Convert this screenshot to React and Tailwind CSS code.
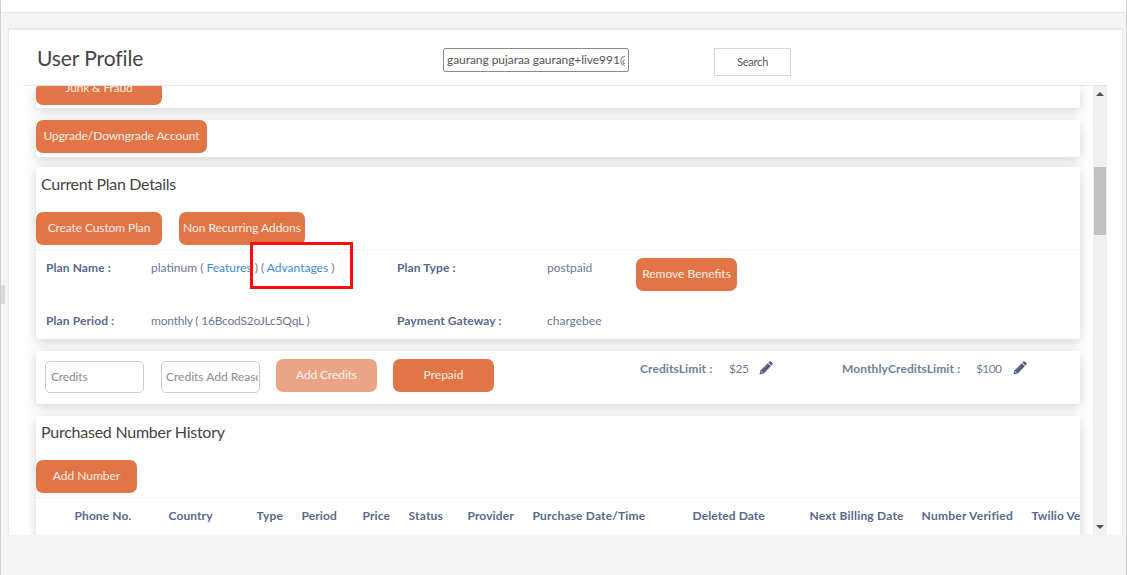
import clsx from "clsx";

const columns = [
  { label: "Phone No.", className: "w-[94px] tracking-[0.1px]" },
  { label: "Country", className: "w-[88px] tracking-[0.1px]" },
  { label: "Type", className: "w-[45px] tracking-[0.2px]" },
  { label: "Period", className: "w-[61px] tracking-[0.1px]" },
  { label: "Price", className: "w-[46px] tracking-[0.1px]" },
  { label: "Status", className: "w-[59px] tracking-[0.2px]" },
  { label: "Provider", className: "w-[65px] tracking-[0.1px]" },
  { label: "Purchase Date/Time", className: "w-40 tracking-[0.17px]" },
  { label: "Deleted Date", className: "w-[117px] tracking-[0.1px]" },
  { label: "Next Billing Date", className: "w-28 tracking-[0.2px]" },
  { label: "Number Verified", className: "w-[110px] tracking-[0.25px]" },
  { label: "Twilio Verified", className: "w-[110px] tracking-[0.1px]" },
];

function Button({ children, className }) {
  return (
    <button
      className={clsx(
        "block h-[33px] shrink-0 rounded-[7px] bg-[#e27546] pb-px text-center text-[12px] whitespace-nowrap text-[#fdeee6]",
        className
      )}
    >
      {children}
    </button>
  );
}

function Card({ children, className }) {
  return (
    <section
      className={clsx(
        "w-[1044px] shrink-0 overflow-hidden rounded-[3px] bg-white shadow-[0_3px_12px_rgba(60,60,75,0.22)]",
        className
      )}
    >
      {children}
    </section>
  );
}

function Field({ label, children, labelClass, valueClass }) {
  return (
    <>
      <b className={clsx("shrink-0 font-bold tracking-[0.1px] whitespace-nowrap", labelClass)}>{label}</b>
      <span className={clsx("shrink-0 whitespace-nowrap", valueClass)}>{children}</span>
    </>
  );
}

function Pencil() {
  return (
    <svg className="size-[14px] shrink-0" viewBox="0 0 14 14" fill="#505b85">
      <path d="M8.7 2.2 11.8 5.3 4.7 12.4 0.5 13.5 1.6 9.3Z" />
      <path d="M9.3 1.6 10.4 0.6Q11.2-.1 12 .7L13.3 2Q14.1 2.8 13.4 3.6L12.4 4.7Z" />
      <path d="M2.4 10.1 3.9 11.6 2.5 12.1 1.9 11.5Z" fill="#c3c9d9" />
      <path d="M3.2 9.2 8.4 4" stroke="#99a4bd" strokeWidth="0.5" />
    </svg>
  );
}

function Scrollbar() {
  return (
    <div className="flex h-full w-[14px] shrink-0 flex-col items-center bg-[#f0f0f0] pt-[6px] pb-[6px]">
      <svg width="8" height="4" viewBox="0 0 8 4">
        <path d="M0 4 4 0 8 4Z" fill="#505050" />
      </svg>
      <div className="mt-[71px] h-[68px] w-3 bg-[#c1c1c1]" />
      <svg className="mt-auto" width="8" height="4" viewBox="0 0 8 4">
        <path d="M0 0 4 4 8 0Z" fill="#505050" />
      </svg>
    </div>
  );
}

export default function App() {
  return (
    <div className="relative flex h-[575px] w-[1127px] flex-col overflow-hidden border-x border-[#cfcfcf] bg-[#f4f4f4] font-['Lato',sans-serif] text-[12px] leading-4 text-[#6b7896]">
      <div className="h-[13px] shrink-0 border-b border-[#e5e5e5] bg-white" />

      <main className="mt-[17px] ml-2 flex h-[505px] w-[1113px] shrink-0 flex-col bg-white shadow-[0_-1px_1px_1px_#e9e9e9]">
        <header className="mx-[14px] flex h-[56px] shrink-0 items-start border-b border-[#e6e6e6]">
          <h1 className="mt-[14px] ml-[14px] w-[406px] text-[21px] leading-7 tracking-[-0.1px] text-[#444]">User Profile</h1>
          <input
            className="mt-[18px] h-6 w-[186px] rounded-[2px] border border-[#8a8a8a] px-[3px] pb-px text-[12px] tracking-[-0.06px] text-[#555]"
            defaultValue="gaurang pujaraa gaurang+live991@gmail.com"
          />
          <button className="mt-[18px] ml-[85px] h-7 w-[77px] border border-[#d6d6d6] text-[11px] tracking-[-0.2px] text-[#555]">Search</button>
        </header>

        <div className="ml-[14px] flex h-[449px] w-[1084px] overflow-hidden">
          <div className="flex h-full w-[1070px] flex-col overflow-hidden pl-[13px]">
            <Card className="h-[22px]">
              <Button className="-mt-[14px] w-[126px] tracking-[-0.15px]">Junk &amp; Fraud</Button>
            </Card>

            <Card className="mt-3 h-[37px]">
              <Button className="w-[171px] tracking-[-0.08px]">Upgrade/Downgrade Account</Button>
            </Card>

            <Card className="mt-[10px] h-[172px]">
              <h2 className="mt-[7px] ml-[5px] text-[16px] leading-5 tracking-[-0.3px] text-[#444]">Current Plan Details</h2>
              <div className="mt-[18px] flex gap-[17px]">
                <Button className="w-[126px] tracking-[-0.1px]">Create Custom Plan</Button>
                <Button className="w-[126px] tracking-[-0.05px]">Non Recurring Addons</Button>
              </div>
              <div className="mt-1 flex h-[90px] border-t border-[#edf0f6] pl-[10px]">
                <div className="flex w-[590px] flex-col gap-[37px] pt-[10px]">
                  <div className="flex">
                    <Field label="Plan Name :" labelClass="w-[105px] text-[#59688c]" valueClass="w-[246px]">
                      platinum ( <a className="text-[#428bca]">Features</a> ) ( <a className="text-[#428bca]">Advantages</a> )
                    </Field>
                    <Field label="Plan Type :" labelClass="w-[150px] text-[#59688c]">postpaid</Field>
                  </div>
                  <div className="flex">
                    <Field label="Plan Period :" labelClass="w-[105px] text-[#59688c]" valueClass="w-[246px] tracking-[-0.22px]">
                      monthly ( 16BcodS2oJLc5QqL )
                    </Field>
                    <Field label="Payment Gateway :" labelClass="w-[150px] text-[#59688c]">chargebee</Field>
                  </div>
                </div>
                <Button className="mt-2 w-[101px]">Remove Benefits</Button>
              </div>
            </Card>

            <Card className="mt-3 flex h-[53px] items-start">
              <input
                className="mt-[10px] ml-[9px] h-8 w-[99px] rounded-[5px] border border-[#ccc] px-[5px] pb-0.5 text-[12px] tracking-[-0.15px] placeholder:text-[#8b8b8b]"
                placeholder="Credits"
              />
              <input
                className="mt-[10px] ml-[17px] h-8 w-[99px] rounded-[5px] border border-[#ccc] pr-px pl-[4px] pb-0.5 text-[12px] placeholder:text-[#8b8b8b]"
                placeholder="Credits Add Reason"
              />
              <Button className="mt-2 ml-4 w-[101px] tracking-[-0.1px] opacity-65">Add Credits</Button>
              <Button className="mt-2 ml-4 w-[101px]">Prepaid</Button>
              <div className="mt-[10px] ml-[146px] flex w-[202px] text-[#6b7f99]">
                <Field label="CreditsLimit :" labelClass="w-[89px]" valueClass="w-[30px] tracking-[-0.4px]">$25</Field>
                <Pencil />
              </div>
              <div className="mt-[10px] flex text-[#6b7f99]">
                <Field label="MonthlyCreditsLimit :" labelClass="w-[134px]" valueClass="w-[37px] tracking-[-0.6px]">$100</Field>
                <Pencil />
              </div>
            </Card>

            <Card className="mt-3 h-[160px]">
              <h2 className="mt-[6px] ml-[5px] text-[16px] leading-5 tracking-[-0.25px] text-[#444]">Purchased Number History</h2>
              <Button className="mt-[18px] w-[101px]">Add Number</Button>
              <div className="mt-1 flex border-t border-[#edf0f6] pt-[10px] pl-[38.5px] font-bold text-[#59688c]">
                {columns.map((col) => (
                  <span key={col.label} className={clsx("shrink-0 whitespace-nowrap", col.className)}>
                    {col.label}
                  </span>
                ))}
              </div>
            </Card>
          </div>
          <Scrollbar />
        </div>
      </main>

      {/* collapsed sidebar handle */}
      <div className="absolute top-[285px] -left-px h-[19px] w-[5px] rounded-r-[2px] bg-[#d9d9d9]" />
      {/* highlight box */}
      <div className="absolute top-[242px] left-[249px] h-[47px] w-[103px] border-3 border-[#ff0a0a]" />
    </div>
  );
}
